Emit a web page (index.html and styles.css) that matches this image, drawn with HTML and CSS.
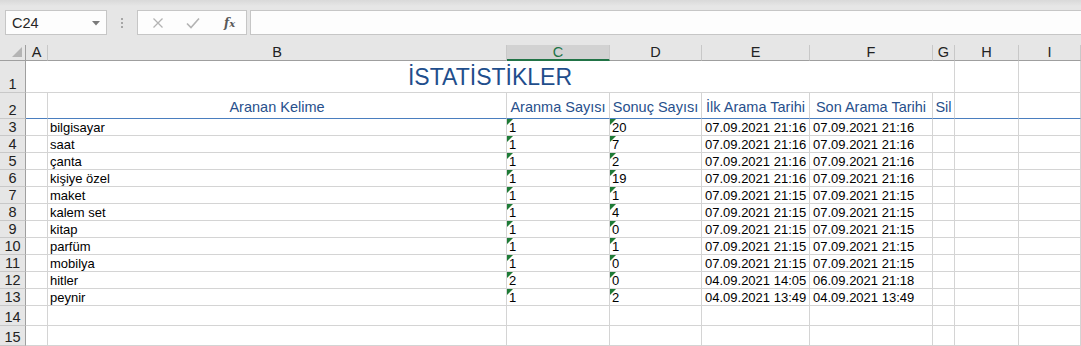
FILE: index.html
```html
<!DOCTYPE html>
<html lang="tr">
<head>
<meta charset="utf-8">
<title>İstatistikler</title>
<link rel="stylesheet" href="styles.css">
</head>
<body>
<div class="app">
  <div class="toolbar">
    <div class="namebox"><span class="nb-text">C24</span><svg class="nb-arrow" width="8" height="5" viewBox="0 0 8 5"><path d="M0 0H8L4 4.5Z" fill="#7a7a7a"/></svg></div>
    <div class="dots"><i></i><i></i><i></i></div>
    <div class="fbtns">
      <svg class="ficon" width="12" height="12" viewBox="0 0 12 12"><path d="M1.5 1.5L10.5 10.5M10.5 1.5L1.5 10.5" stroke="#b3b3b3" stroke-width="1.3" fill="none"/></svg>
      <svg class="ficon" width="14" height="12" viewBox="0 0 14 12"><path d="M1 6.5L5 10.5L13 1.5" stroke="#b3b3b3" stroke-width="1.6" fill="none"/></svg>
      <span class="fx">f<span class="fxx">x</span></span>
    </div>
    <div class="fbar"></div>
  </div>
  <div class="sheet">
    <div class="ch corner"><svg width="10" height="10" viewBox="0 0 10 10"><path d="M10 0V10H0Z" fill="#b4b4b4"/></svg></div>
    <div class="ch">A</div>
    <div class="ch">B</div>
    <div class="ch sel">C</div>
    <div class="ch">D</div>
    <div class="ch">E</div>
    <div class="ch">F</div>
    <div class="ch">G</div>
    <div class="ch">H</div>
    <div class="ch">I</div>

    <div class="rh">1</div>
    <div class="c title">İSTATİSTİKLER</div>
    <div class="c"></div>
    <div class="c"></div>

    <div class="rh">2</div>
    <div class="c hd"></div>
    <div class="c hd ctr">Aranan Kelime</div>
    <div class="c hd ctr">Aranma Sayısı</div>
    <div class="c hd ctr">Sonuç Sayısı</div>
    <div class="c hd ctr">İlk Arama Tarihi</div>
    <div class="c hd ctr">Son Arama Tarihi</div>
    <div class="c hd ctr">Sil</div>
    <div class="c hd"></div>
    <div class="c hd"></div>

    <div class="rh">3</div><div class="c"></div><div class="c kw">bilgisayar</div><div class="c tx">1</div><div class="c tx">20</div><div class="c">07.09.2021 21:16</div><div class="c">07.09.2021 21:16</div><div class="c"></div><div class="c"></div><div class="c"></div>
    <div class="rh">4</div><div class="c"></div><div class="c kw">saat</div><div class="c tx">1</div><div class="c tx">7</div><div class="c">07.09.2021 21:16</div><div class="c">07.09.2021 21:16</div><div class="c"></div><div class="c"></div><div class="c"></div>
    <div class="rh">5</div><div class="c"></div><div class="c kw">çanta</div><div class="c tx">1</div><div class="c tx">2</div><div class="c">07.09.2021 21:16</div><div class="c">07.09.2021 21:16</div><div class="c"></div><div class="c"></div><div class="c"></div>
    <div class="rh">6</div><div class="c"></div><div class="c kw">kişiye özel</div><div class="c tx">1</div><div class="c tx">19</div><div class="c">07.09.2021 21:16</div><div class="c">07.09.2021 21:16</div><div class="c"></div><div class="c"></div><div class="c"></div>
    <div class="rh">7</div><div class="c"></div><div class="c kw">maket</div><div class="c tx">1</div><div class="c tx">1</div><div class="c">07.09.2021 21:15</div><div class="c">07.09.2021 21:15</div><div class="c"></div><div class="c"></div><div class="c"></div>
    <div class="rh">8</div><div class="c"></div><div class="c kw">kalem set</div><div class="c tx">1</div><div class="c tx">4</div><div class="c">07.09.2021 21:15</div><div class="c">07.09.2021 21:15</div><div class="c"></div><div class="c"></div><div class="c"></div>
    <div class="rh">9</div><div class="c"></div><div class="c kw">kitap</div><div class="c tx">1</div><div class="c tx">0</div><div class="c">07.09.2021 21:15</div><div class="c">07.09.2021 21:15</div><div class="c"></div><div class="c"></div><div class="c"></div>
    <div class="rh">10</div><div class="c"></div><div class="c kw">parfüm</div><div class="c tx">1</div><div class="c tx">1</div><div class="c">07.09.2021 21:15</div><div class="c">07.09.2021 21:15</div><div class="c"></div><div class="c"></div><div class="c"></div>
    <div class="rh">11</div><div class="c"></div><div class="c kw">mobilya</div><div class="c tx">1</div><div class="c tx">0</div><div class="c">07.09.2021 21:15</div><div class="c">07.09.2021 21:15</div><div class="c"></div><div class="c"></div><div class="c"></div>
    <div class="rh">12</div><div class="c"></div><div class="c kw">hitler</div><div class="c tx">2</div><div class="c tx">0</div><div class="c">04.09.2021 14:05</div><div class="c">06.09.2021 21:18</div><div class="c"></div><div class="c"></div><div class="c"></div>
    <div class="rh">13</div><div class="c"></div><div class="c kw">peynir</div><div class="c tx">1</div><div class="c tx">2</div><div class="c">04.09.2021 13:49</div><div class="c">04.09.2021 13:49</div><div class="c"></div><div class="c"></div><div class="c"></div>
    <div class="rh">14</div><div class="c"></div><div class="c"></div><div class="c"></div><div class="c"></div><div class="c"></div><div class="c"></div><div class="c"></div><div class="c"></div><div class="c"></div>
    <div class="rh">15</div><div class="c"></div><div class="c"></div><div class="c"></div><div class="c"></div><div class="c"></div><div class="c"></div><div class="c"></div><div class="c"></div><div class="c"></div>
  </div>
</div>
</body>
</html>
```
FILE: styles.css
```css
* { box-sizing: border-box; }
html, body { margin: 0; padding: 0; }
body {
  width: 1081px;
  height: 346px;
  overflow: hidden;
  background: #e6e6e6;
  font-family: "Liberation Sans", Arial, sans-serif;
  color: #000;
}
.app { display: flex; flex-direction: column; }

.toolbar {
  height: 45px;
  display: flex;
  align-items: flex-start;
  padding: 10px 0 0 5px;
  background: linear-gradient(#d9d9d9 0px, #e6e6e6 6px, #e6e6e6 100%);
}
.namebox {
  width: 102px;
  height: 25px;
  background: #fdfdfd;
  border: 1px solid #c6c6c6;
  display: flex;
  align-items: center;
  justify-content: space-between;
  padding: 0 6px 0 6px;
}
.nb-text { font-size: 14.5px; color: #262626; }
.nb-arrow { margin-top: 1px; }
.dots {
  width: 30px;
  height: 25px;
  display: flex;
  flex-direction: column;
  align-items: center;
  justify-content: center;
  gap: 2px;
}
.dots i { display: block; width: 2px; height: 2px; background: #a6a6a6; }
.fbtns {
  width: 110px;
  height: 25px;
  background: #fdfdfd;
  border: 1px solid #c6c6c6;
  display: flex;
  align-items: center;
  padding: 0 0 0 14px;
  gap: 22px;
}
.fx {
  font-family: "DejaVu Serif", "Liberation Serif", serif;
  font-style: italic;
  font-weight: bold;
  font-size: 12px;
  color: #595959;
  margin-left: 2px;
}
.fxx { font-size: 10px; }
.fbar {
  flex: 1;
  height: 25px;
  margin-left: 3px;
  background: #fdfdfd;
  border: 1px solid #c6c6c6;
  border-right: none;
}

.sheet {
  display: grid;
  grid-template-columns: 26px 22px 459px 103px 92px 108px 123px 22px 64px 62px;
  grid-template-rows: 16px 32px 26px repeat(11, 17px) 20px 20px;
  background: #fff;
}
.ch {
  background: #e6e6e6;
  border-right: 1px solid #c8c8c8;
  border-bottom: 1px solid #9f9f9f;
  font-size: 14.5px;
  line-height: 15px;
  color: #222;
  display: flex;
  align-items: center;
  justify-content: center;
}
.ch.corner {
  border-right: 1px solid #9f9f9f;
  justify-content: flex-end;
  align-items: flex-end;
  padding: 0 3px 3px 0;
}
.ch.sel {
  background: #d2d2d2;
  color: #217346;
  border-bottom: 2px solid #217346;
  border-right-color: #c8c8c8;
}
.rh {
  background: #e6e6e6;
  border-right: 1px solid #9f9f9f;
  border-bottom: 1px solid #c8c8c8;
  font-size: 14.5px;
  line-height: 16px;
  color: #222;
  display: flex;
  align-items: flex-end;
  justify-content: center;
}
.c {
  position: relative;
  border-right: 1px solid #d4d4d4;
  border-bottom: 1px solid #d4d4d4;
  font-size: 13px;
  line-height: 15px;
  padding: 0 3px;
  white-space: nowrap;
  display: flex;
  align-items: flex-end;
}
.kw { padding-left: 2px; }
.title {
  grid-column: span 7;
  justify-content: center;
  font-size: 23px;
  line-height: 28px;
  color: #1f4e8c;
  padding-bottom: 1px;
}
.hd {
  border-bottom: 1px solid #4a7ebf;
  font-size: 14.5px;
  line-height: 17px;
  color: #28508c;
  padding-bottom: 2px;
}
.ctr { justify-content: center; padding: 0 0 2px 0; }
.tx { padding-left: 2px; }
.tx::before {
  content: "";
  position: absolute;
  left: 0;
  top: 0;
  border-top: 6px solid #1e7b36;
  border-right: 6px solid transparent;
}
```
